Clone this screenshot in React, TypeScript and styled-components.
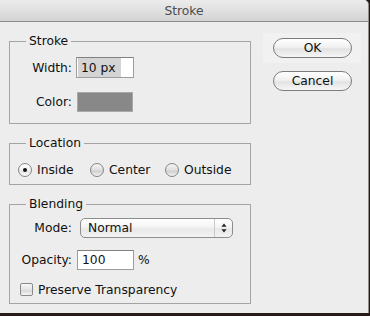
import React from 'react';
import styled, { createGlobalStyle } from 'styled-components';

const Global = createGlobalStyle`
  html, body { margin: 0; padding: 0; background: #2a1b1b; }
  body {
    font-family: "DejaVu Sans", "Lucida Grande", sans-serif;
    font-size: 12.3px;
    color: #111;
  }
`;

const Window = styled.div`
  width: 369px;
  height: 313px;
  box-sizing: border-box;
  background: #ededed;
  border-right: 1px solid #8e8e8e;
  border-top-right-radius: 5px;
  overflow: hidden;
  display: flex;
  flex-direction: column;
`;

const TitleBar = styled.div`
  height: 21px;
  line-height: 23px;
  flex: none;
  text-align: center;
  color: #4d4d4d;
  background: linear-gradient(#ececec, #d4d4d4);
  border-bottom: 1px solid #8f8f8f;
`;

const Body = styled.div`
  display: flex;
  flex: 1;
`;

const LeftCol = styled.div`
  width: 242px;
  padding: 11px 0 0 9px;
  display: flex;
  flex-direction: column;
  gap: 11px;
`;

const RightCol = styled.div`
  padding: 11px 0 0 12px;
  display: flex;
  flex-direction: column;
  align-items: flex-start;
`;

const FocusArea = styled.div`
  padding: 5px 9px 5px 10px;
  background: #f1f1f1;
`;

const Button = styled.div<{ $indent?: boolean }>`
  width: 79px;
  height: 20px;
  box-sizing: border-box;
  border: 1px solid #7c7c7c;
  border-radius: 10px;
  background: linear-gradient(#ffffff, #f1f1f1 45%, #e2e2e2 55%, #f6f6f6);
  display: flex;
  align-items: center;
  justify-content: center;
  color: #111;
  margin: ${(p) => (p.$indent ? '8px 0 0 10px' : '0')};
`;

const Group = styled.fieldset`
  margin: 0;
  padding: 0;
  min-width: 0;
  border: 1px solid #a4a4a4;
`;

const Legend = styled.legend`
  margin-left: 16px;
  padding: 0 3px;
  line-height: 16px;
  color: #111;
`;

const FormGrid = styled.div`
  display: grid;
  grid-template-columns: 62px auto;
  column-gap: 5px;
  row-gap: 14px;
  align-items: center;
  padding: 8px 0 11px;
`;

const Label = styled.span`
  text-align: right;
  white-space: nowrap;
`;

const TextField = styled.div<{ $w: number; $h: number; $shift?: number }>`
  width: ${(p) => p.$w}px;
  height: ${(p) => p.$h}px;
  margin-left: ${(p) => p.$shift ?? 0}px;
  box-sizing: border-box;
  border: 1px solid #9d9d9d;
  border-top-color: #808080;
  background: #fff;
  display: flex;
  align-items: center;
  padding-left: 4px;
  white-space: nowrap;
`;

const SelectedText = styled.span`
  margin-left: -3px;
  align-self: stretch;
  display: flex;
  align-items: center;
  padding: 0 5px 0 3px;
  background: #d4d4d4;
`;

const Swatch = styled.div`
  width: 56px;
  height: 20px;
  box-sizing: border-box;
  background: #888888;
  border: 1px solid #a9a9a9;
`;

const RadioRow = styled.div`
  display: grid;
  grid-template-columns: 72px 75px auto;
  padding: 12px 0 7px 8px;
`;

const RadioItem = styled.label`
  display: flex;
  align-items: center;
  gap: 5px;
  height: 14px;
  white-space: nowrap;
`;

const RadioDot = styled.span<{ $checked?: boolean }>`
  width: 14px;
  height: 14px;
  box-sizing: border-box;
  border-radius: 50%;
  border: 1px solid #858585;
  background: ${(p) =>
    p.$checked
      ? 'linear-gradient(#ffffff, #f2f2f2 50%, #e6e6e6 60%, #fafafa)'
      : 'linear-gradient(#f6f6f6, #dedede 50%, #d0d0d0 60%, #f2f2f2)'};
  display: flex;
  align-items: center;
  justify-content: center;
  flex: none;
  &::after {
    content: '';
    width: 4px;
    height: 4px;
    border-radius: 50%;
    background: #111;
    display: ${(p) => (p.$checked ? 'block' : 'none')};
  }
`;

const BlendStack = styled.div`
  display: flex;
  flex-direction: column;
  padding: 6px 0 7px;
`;

const FieldRow = styled.div<{ $top?: number }>`
  display: grid;
  grid-template-columns: 62px auto;
  column-gap: 5px;
  align-items: center;
  margin-top: ${(p) => p.$top ?? 0}px;
`;

const Inline = styled.div`
  display: flex;
  align-items: center;
  gap: 4px;
`;

const Select = styled.div`
  margin-left: 3px;
  width: 153px;
  height: 20px;
  box-sizing: border-box;
  border: 1px solid #8d8d8d;
  border-radius: 5px;
  background: linear-gradient(#ffffff, #f4f4f4 45%, #e8e8e8 55%, #f3f3f3);
  display: flex;
  align-items: stretch;
`;

const SelectValue = styled.span`
  flex: 1;
  padding-left: 7px;
  display: flex;
  align-items: center;
`;

const SelectArrows = styled.span`
  width: 17px;
  border-left: 1px solid #c9c9c9;
  display: flex;
  align-items: center;
  justify-content: center;
`;

const CheckRow = styled.label`
  margin-top: 13px;
  padding-left: 10px;
  display: flex;
  align-items: center;
  gap: 5px;
  height: 13px;
  white-space: nowrap;
`;

const CheckBox = styled.span`
  width: 13px;
  height: 13px;
  box-sizing: border-box;
  border: 1px solid #8a8a8a;
  border-radius: 2px;
  background: linear-gradient(#f8f8f8, #e4e4e4 50%, #d9d9d9 60%, #f4f4f4);
  flex: none;
`;

export default function App() {
  return (
    <>
      <Global />
      <Window>
        <TitleBar>Stroke</TitleBar>
        <Body>
          <LeftCol>
            <Group>
              <Legend>Stroke</Legend>
              <FormGrid>
                <Label>Width:</Label>
                <TextField $w={58} $h={21} $shift={-1}>
                  <SelectedText>10 px</SelectedText>
                </TextField>
                <Label>Color:</Label>
                <Swatch />
              </FormGrid>
            </Group>
            <Group>
              <Legend>Location</Legend>
              <RadioRow>
                <RadioItem>
                  <RadioDot $checked />
                  Inside
                </RadioItem>
                <RadioItem>
                  <RadioDot />
                  Center
                </RadioItem>
                <RadioItem>
                  <RadioDot />
                  Outside
                </RadioItem>
              </RadioRow>
            </Group>
            <Group>
              <Legend>Blending</Legend>
              <BlendStack>
                <FieldRow>
                  <Label>Mode:</Label>
                  <Select>
                    <SelectValue>Normal</SelectValue>
                    <SelectArrows>
                      <svg width="6" height="10" viewBox="0 0 6 10">
                        <path d="M3 0.5 L5.6 3.8 H0.4 Z" fill="#222" />
                        <path d="M3 9.5 L5.6 6.2 H0.4 Z" fill="#222" />
                      </svg>
                    </SelectArrows>
                  </Select>
                </FieldRow>
                <FieldRow $top={12}>
                  <Label>Opacity:</Label>
                  <Inline>
                    <TextField $w={57} $h={20}>100</TextField>
                    <span>%</span>
                  </Inline>
                </FieldRow>
                <CheckRow>
                  <CheckBox />
                  Preserve Transparency
                </CheckRow>
              </BlendStack>
            </Group>
          </LeftCol>
          <RightCol>
            <FocusArea>
              <Button>OK</Button>
            </FocusArea>
            <Button $indent>Cancel</Button>
          </RightCol>
        </Body>
      </Window>
    </>
  );
}
